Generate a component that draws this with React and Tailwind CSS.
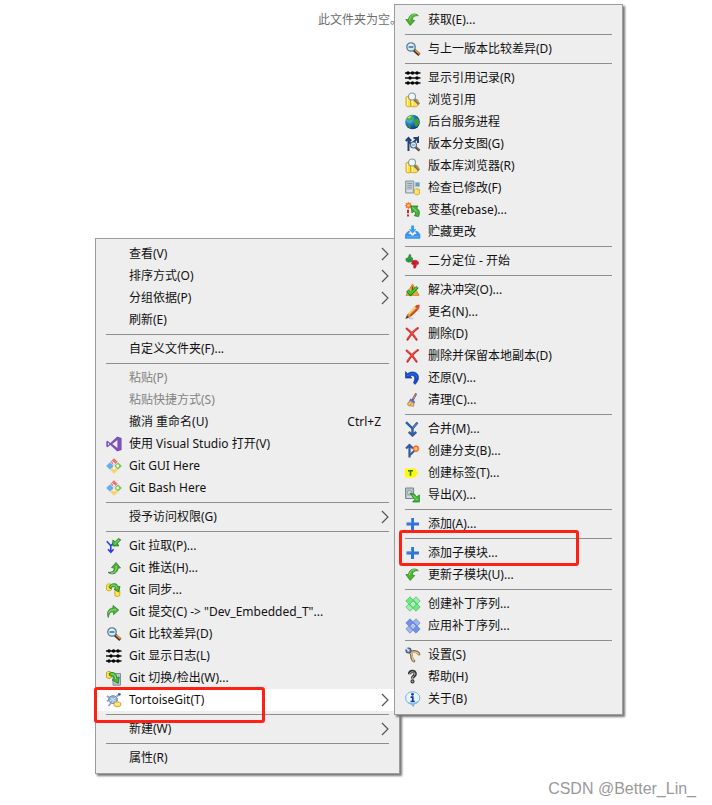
import React from "react";

const Svg = ({ children }) => (
  <svg viewBox="0 0 16 16" className="h-4 w-4 shrink-0" aria-hidden="true">
    {children}
  </svg>
);

const IconFetch = () => (
  <Svg>
    <path d="M13.3 3.6C11 1 4.6 1 3.4 7.5H.8l4.4 6 4.600-5L7.200 8C7.300 5 9.500 3.600 13.300 3.600Z" fill="#4bb52f" stroke="#2c7d22" strokeWidth=".7" />
    <path d="M10.500 2.700C7.500 2.200 5 4.200 4.600 8.300" fill="none" stroke="#8fe36b" strokeWidth="1" />
  </Svg>
);

const IconPush = () => (
  <Svg>
    <path d="M2 12.300C5 15 11.500 14.500 12 8h2.500L10 2.500 5.500 7.600 8.300 8C8.300 11 6 12.500 2 12.300Z" fill="#4bb52f" stroke="#39733a" strokeWidth=".8" />
    <path d="M5 13C8.500 13.300 10.200 11 10.300 6" fill="none" stroke="#9ade7c" strokeWidth="1" />
  </Svg>
);

const IconCommit = () => (
  <Svg>
    <path d="M2.300 13.500C.2 8 3 4 7 4.200V1.500L12.700 6 7.600 10.600 7.200 7.800C4.500 7.500 3 9.500 2.300 13.500Z" fill="#4bb52f" stroke="#33793a" strokeWidth=".8" />
    <path d="M2.600 9C3.500 6.300 6 5.600 10 5.900" fill="none" stroke="#9ade7c" strokeWidth="1" />
  </Svg>
);

const IconDiff = () => (
  <Svg>
    <path d="m9 9 5.400 4.800" stroke="#3c2f2a" strokeWidth="3.200" />
    <path d="m10.200 9.200 4.300 3.800" stroke="#ee9c32" strokeWidth="1.600" />
    <circle cx="6" cy="6" r="4.200" fill="#c9ecfa" stroke="#62758a" strokeWidth="1.300" />
    <path d="M3.600 6h4.800" stroke="#3f6f94" strokeWidth="1.500" />
    <path d="M3.800 4.400a3 3 0 0 1 3-1.200" fill="none" stroke="#fff" />
  </Svg>
);

const IconLog = () => (
  <Svg>
    <path d="M0 3h15.500M0 8h15.500M0 13h15.500" stroke="#101010" strokeWidth="1.300" />
    <g fill="#000">
      <circle cx="3" cy="3" r="1.700" />
      <circle cx="7.500" cy="3" r="1.700" />
      <circle cx="12" cy="3" r="1.700" />
      <circle cx="5" cy="8" r="1.700" />
      <circle cx="12" cy="8" r="1.700" />
      <circle cx="3" cy="13" r="1.700" />
      <circle cx="7.500" cy="13" r="1.700" />
      <circle cx="12" cy="13" r="1.700" />
    </g>
  </Svg>
);

const IconBrowse = () => (
  <Svg>
    <path d="M1 5.500C1 4 5 3.500 6.500 5v9C5 15.400 1 15 1 13.500Z" fill="#ffdf45" stroke="#c79a13" strokeWidth=".8" />
    <path d="M5.500 8c1.500-1.300 6-1.300 7.500 0v5.500c-1.500 1.800-6 1.800-7.500 0Z" fill="#ffe04e" stroke="#c79a13" strokeWidth=".8" />
    <path d="M2.500 6v7.500M7.500 9v5" stroke="#fff7a8" />
    <path d="m9.500 7.500 4.600 4.600" stroke="#7c675f" strokeWidth="2.600" />
    <path d="m10.500 8 3.700 3.600" stroke="#c5a58b" strokeWidth=".9" />
    <circle cx="7" cy="4.500" r="3.500" fill="#e7f8ff" stroke="#8b979d" strokeWidth="1.100" />
  </Svg>
);

const IconGlobe = () => (
  <Svg>
    <defs>
      <radialGradient id="ocean" cx=".3" cy=".3" r=".8">
        <stop offset="0" stopColor="#73d4ff" />
        <stop offset=".5" stopColor="#1673cd" />
        <stop offset="1" stopColor="#072f73" />
      </radialGradient>
    </defs>
    <circle cx="7.500" cy="8" r="7.300" fill="url(#ocean)" />
    <path d="M2.500 3.200C5 .9 7.500.8 8.500 1.200L7.300 3 9 4 6.300 6.500 4 7.200 1.300 5.500Z" fill="#54ae3b" />
    <path d="m9 6 3-2 2 2 .3 3.500-2.500 3.300-1.800-.5L9.300 9.500 8 8Z" fill="#3f9b37" />
    <path d="m3.500 10 2 .8.6 2-1.300 1.300C3.500 13.300 2.500 11.800 2.500 10.500Z" fill="#398e3d" />
    <path d="M2.500 3.700 5.200 2l1 .5-2 2Z" fill="#bff28a" />
  </Svg>
);

const IconGraph = () => (
  <Svg>
    <path d="M3.500 15V2M.8 5l2.700-3L6.200 5M3.500 5.500l5 4" fill="none" stroke="#25417b" strokeWidth="2" />
    <path d="M7.500 7 13 2v5M8.500 2h5.500" fill="none" stroke="#214078" strokeWidth="2" />
    <path d="m10.500 11 4 3.600" stroke="#4c403d" strokeWidth="2.500" />
    <path d="m11.500 11.200 3 2.600" stroke="#d28a45" />
    <circle cx="8.500" cy="9" r="3" fill="#d2effa" stroke="#586d83" strokeWidth="1.100" />
    <path d="M7 9h3" stroke="#5891b1" />
  </Svg>
);

const IconCheck = () => (
  <Svg>
    <path d="M.6 1h8.100v12H.6Z" fill="#c2cbd0" stroke="#8b989f" />
    <path d="M2.300 3.500H7M2.300 5.700H7M2.300 7.900H7" stroke="#8b9aa2" />
    <path d="M2 11h5" stroke="#eef4f6" />
    <path d="M10.200 2.500h4.300v4h-4.300Z" fill="#5b9fcb" stroke="#a7bdca" />
    <path d="M9.500 9.500c1-1 4-1 5 0v4.300c-1 1.300-4 1.300-5 0Z" fill="#ffdc49" stroke="#cda131" strokeWidth=".8" />
    <path d="M10.900 9.700v4" stroke="#fff6a0" />
  </Svg>
);

const IconRebase = () => (
  <Svg>
    <path d="M3.500.3v6.400M.3 3.500h6.400M1.200 1.200l4.600 4.600M5.800 1.200 1.200 5.800" stroke="#f2622f" strokeWidth="1.500" />
    <circle cx="3.500" cy="3.500" r="1.300" fill="#ffe35a" />
    <path d="M3 7.800v3.500M3 12.500v2" stroke="#e4201d" strokeWidth="2" />
    <path d="M6 4h7L11.500 6.200c2.800 1.400 3.800 4.500 2 8.300l-4-.7c1.300-2 1.300-3.200-.5-4.700L7 11Z" fill="#43b635" stroke="#257a25" strokeWidth=".8" />
    <path d="m7.500 5.300 4 4" stroke="#96e57d" />
  </Svg>
);

const IconStash = () => (
  <Svg>
    <path d="m3 7.500-2.600 3V14.300h14.500v-3.800L12.400 7.500h-2l2 3h-2.800l-1 1.500H6.500l-1-1.500H2.700l2-3Z" fill="#3197f6" stroke="#2a81df" strokeWidth=".7" />
    <path d="M1.500 12.800h12.300" stroke="#77beff" strokeWidth=".7" />
    <path d="M6.200 1.500h2.800v3.700h2.400L7.600 9.600 3.800 5.200h2.400Z" fill="#3b9df5" />
  </Svg>
);

const IconBisect = () => (
  <Svg>
    <path d="M.8 5.800 3.400 4.600 4.300 1.500c1.500-.3 2 .7 1.400 2.700l2 .8-.6 3.600-3.300.7L1.300 8.300Z" fill="#2aa33c" stroke="#176128" strokeWidth=".5" />
    <path d="M3.500 6 6.500 6.400M3.500 7.500l2.600.2" stroke="#1b7a2b" strokeWidth=".6" />
    <path d="M13.300 8.700 11 7.200l-3.500.3-1 3.500 2.200 1-.1 2.700c.9.900 2.100.4 2.400-.8l.5-2.100 2-.7Z" fill="#de2029" stroke="#971b24" strokeWidth=".5" />
    <path d="m8 8.800 2.700.4M7.800 10.300l2.600.3" stroke="#8f1720" strokeWidth=".6" />
  </Svg>
);

const IconResolve = () => (
  <Svg>
    <path d="M7.500 2 14 13.300H1Z" fill="#f6a83b" stroke="#d48625" />
    <path d="M7.500 4.500v4" stroke="#6d4820" strokeWidth="1.500" />
    <path d="m2.300 8.600 3.200 3.600L12.500 5" fill="none" stroke="#187c1e" strokeWidth="3.200" />
    <path d="m2.700 8.800 2.800 2.900L12.200 5" fill="none" stroke="#39d12d" strokeWidth="1.800" />
  </Svg>
);

const IconRename = () => (
  <Svg>
    <path d="m.8 14.600 1.700-4 7.900-8.300L14.200 1l-.6 4-8.200 7.800Z" fill="#ef8b28" stroke="#ad6425" strokeWidth=".7" />
    <path d="m3.600 10 7-7" stroke="#ffd48b" strokeWidth="1.600" />
    <path d="m5.500 11.800 6.700-6.500" stroke="#c13f1e" strokeWidth="1.500" />
    <path d="m10 2.500 1.500-1.300 2.900-.5-.3 3-1.200 1.500Z" fill="#e64035" />
    <path d="m.8 14.600 1.300-3 1.800 1.700Z" fill="#25395d" />
    <path d="M4 14.700h4.500" stroke="#b7bdc5" />
  </Svg>
);

const IconDelete = () => (
  <Svg>
    <path d="M1.700 2.700C6 5.800 9 9.500 11.500 13.500M12.800 2.200C8.500 5 5 9.500 2.500 13.500" fill="none" stroke="#c8282a" strokeWidth="2.200" strokeLinecap="round" />
    <path d="M1.700 2.500C6 5.500 9 9 11.300 13M12 2.500C8 5 5 9 2.600 12.500" fill="none" stroke="#ff5246" strokeWidth="1" />
  </Svg>
);

const IconRevert = () => (
  <Svg>
    <path d="M.5 1.600v6.500L7 8 5 6c3.500-1.300 6.500.5 3.500 6.700l1.500 1.700C16 9 14 1.200 6.500 2 4.800 2.200 3.600 2.800 2.700 3.800Z" fill="#164dce" stroke="#082c85" strokeWidth=".6" />
    <path d="m1.800 5.500 1.500.2C7 2 11.500 3.500 11.700 7.500" fill="none" stroke="#3f78e6" strokeWidth=".8" />
  </Svg>
);

const IconClean = () => (
  <Svg>
    <path d="m7.500 8.300 3.300-6.100" stroke="#606774" strokeWidth="2.200" strokeLinecap="round" />
    <path d="m8.300 7 2.300-4.500" stroke="#e88848" strokeWidth="1" />
    <path d="m5.300 7.500 4.200 2.400-.9 4.400-5.300-.6-1-1.600Z" fill="#d9a850" stroke="#a57b42" strokeWidth=".6" />
    <path d="m5 7.500 4.500 2.700" stroke="#576edb" strokeWidth="2.200" />
    <path d="m5.500 10.500-1.500 2M7.500 11.500l-.8 2" stroke="#f9df9c" />
  </Svg>
);

const IconMerge = () => (
  <Svg>
    <path d="M1 1.200 7.500 7.500V14M12.500 1.500 7.500 7.500M3.800 10.800l3.700 3.700L11.200 10.800" fill="none" stroke="#315d9e" strokeWidth="2.400" />
    <path d="m8 7 4-4.800" stroke="#81a8d3" strokeWidth=".6" />
  </Svg>
);

const IconBranch = () => (
  <Svg>
    <path d="M4.500 14.500V2M1 5.500 4.500 2 8 5.500" fill="none" stroke="#315d9e" strokeWidth="2.200" />
    <path d="M5 12 10 7" stroke="#315d9e" strokeWidth="1.900" />
    <circle cx="11" cy="5.700" r="2.400" fill="#fff2a6" stroke="#ff6531" strokeWidth="1.400" />
    <path d="m11 2v7.400M7.400 5.700h7.200" stroke="#ff7540" strokeWidth=".7" />
    <circle cx="11" cy="5.700" r="1" fill="#ffe366" />
  </Svg>
);

const IconTag = () => (
  <Svg>
    <path d="M0 3.500h10L13 8l-3 4.500H0Z" fill="#fffa00" />
    <path d="M3 5.700h5M5.500 5.700v5" stroke="#2c7c2e" strokeWidth="1.600" />
  </Svg>
);

const IconExport = () => (
  <Svg>
    <path d="M.6 1h8v10.500h-8Z" fill="#b8c4c8" stroke="#75858c" />
    <circle cx="4.500" cy="5.500" r="2.200" fill="#cdd7da" stroke="#819198" strokeWidth=".8" />
    <path d="M2 10h5" stroke="#e8eef0" />
    <path d="m5 6.200 4.500 1 2.200 2.700 2.700-2V15H7.600l2.200-2.400Z" fill="#3ebd2f" stroke="#1d7524" strokeWidth=".7" />
    <path d="m8 8.500 4.500 4.500" stroke="#91e36f" />
  </Svg>
);

const IconPlus = () => (
  <Svg>
    <path d="M6 2h3v4.500h5v3H9V14H6V9.500H1.500v-3H6Z" fill="#2f73df" />
    <path d="M6.500 2.500v4.500H2" fill="none" stroke="#5e9bea" strokeWidth=".8" />
  </Svg>
);

const Patch = ({ fill, edge, light }) => (
  <Svg>
    <g stroke={edge} strokeWidth=".6" strokeLinejoin="round">
      <path d="M.8 11 11 .8l4.200 4.200L5 15.200Z" fill={light} />
      <path d="M.8 5 5 .8 15.200 11 11 15.200Z" fill={fill} />
    </g>
    <path d="m4.600 8.200L8 4.800l3.400 3.400L8 11.600Z" fill={light} stroke={edge} strokeWidth=".6" />
    <path d="M6.300 8h.9M8.800 8h.9M8 6v.9M8 9.300v.9" stroke="#fff" strokeWidth=".9" />
  </Svg>
);
const IconPatchCreate = () => <Patch fill="#66ee7b" edge="#579b63" light="#93f4a3" />;
const IconPatchApply = () => <Patch fill="#6b91f5" edge="#6276ae" light="#a0b6f2" />;

const IconSettings = () => (
  <Svg>
    <path d="M4.500 4.500C8.500 5 11.500 3 14 7M5 4.500C8 8 5 12 9 14" fill="none" stroke="#72634a" strokeWidth="2.700" strokeLinecap="round" />
    <path d="M5.500 5C9 5.500 11.500 3.700 13.800 7M5.500 5.500C8.500 8.500 6 12 8.800 13.800" fill="none" stroke="#e9c27c" strokeWidth="1.400" strokeLinecap="round" />
    <circle cx="3.500" cy="3.500" r="2.500" fill="#8ba2c4" stroke="#354f7b" strokeWidth="1.100" />
    <path d="m.8.8 3 3" stroke="#e4eef5" strokeWidth="1.300" />
  </Svg>
);

const IconHelp = () => (
  <Svg>
    <path d="M4.500 5.300C4.500 1.400 10.500 1.600 10.200 5c-.2 2.200-2.700 2-2.700 4.600" fill="none" stroke="#303030" strokeWidth="3.200" />
    <path d="M4.600 5C4.900 2 10.100 2.300 10 5c-.2 1.900-2.600 2-2.500 4.300" fill="none" stroke="#bababa" strokeWidth="1" />
    <circle cx="7.500" cy="12.400" r="1.500" fill="#aaa" stroke="#303030" strokeWidth="1.100" />
  </Svg>
);

const IconAbout = () => (
  <Svg>
    <path d="M7.500.8C3.500.8.7 3.600.7 7c0 3.500 2.600 5.600 5.800 6l1.800 2.500.8-2.700c3.400-.6 5.700-2.700 5.700-5.800C14.800 3.600 11.500.8 7.500.8Z" fill="#e8f5ff" stroke="#6ca6d8" strokeWidth=".9" />
    <path d="M3 11.500c3 1.800 7 1.700 9.800-.8" fill="none" stroke="#7db9e6" strokeWidth="1.400" />
    <circle cx="7.500" cy="3.300" r="1.400" fill="#153aa0" />
    <path d="M5.600 6.200h2.200v4.500M5.500 10.500h4.300" fill="none" stroke="#153aa0" strokeWidth="1.700" />
  </Svg>
);

const IconVisualStudio = () => (
  <Svg>
    <path d="M11.300.4 15.600 2v12l-4.300 1.600-7-6.500L1.600 11.300.3 10.600V5.400l1.300-.7 2.700 2.200Z" fill="#7b52bd" />
    <path d="M1.900 6.500v3L3.400 8ZM6.300 8l5.100 3.900V4.100Z" fill="#eee" />
  </Svg>
);

const IconGit = () => (
  <Svg>
    <path d="m8 .2 3.600 3.600L8 7.400 4.400 3.800Z" fill="#f36f70" />
    <path d="m12 4.200 3.800 3.800-3.800 3.800L8.200 8Z" fill="#7fc653" />
    <path d="m8 8.600 3.600 3.600L8 15.800l-3.600-3.600Z" fill="#fbd268" />
    <path d="m4 4.200L7.800 8 4 11.800.2 8Z" fill="#64aef0" />
    <path d="m5.500 2.700 3 3M8 5.300v5.400" stroke="#f4f4f4" strokeWidth="1" />
    <circle cx="8" cy="5.500" r=".9" fill="#fff" />
    <circle cx="11.700" cy="8" r="1.400" fill="#fff" />
    <circle cx="8" cy="10.600" r=".9" fill="#fff" />
  </Svg>
);

const IconPull = () => (
  <Svg>
    <path d="m.8 3.200 4 4.500V14M2 11.300l2.800 3 2.800-3M4.800 7.700 8.500 4" fill="none" stroke="#283ee4" strokeWidth="1.600" />
    <path d="m14.800 1.800-3.400 3.500 1.300 2.600H6.800V2.200l2.400 1.500L12.500.4Z" fill="#43b835" stroke="#1b7528" strokeWidth=".8" />
    <path d="m13 2-4.500 4" stroke="#95e178" strokeWidth=".9" />
  </Svg>
);

const IconSync = () => (
  <Svg>
    <path d="M.6 3C1.500 1.500 4.500 1.500 5.500 3v5c-1 1-4 1-4.900 0Z" fill="#ffe443" stroke="#c49825" strokeWidth=".8" />
    <path d="M8.800 8.500c1-1 4-1 5 0v5c-1 1.200-4 1.200-5 0Z" fill="#ffe443" stroke="#c49825" strokeWidth=".8" />
    <path d="M3 4.500C6 .5 11.500.7 12.300 5l1.700-.5-1.400 5.500-4.600-2.800 1.600-1C9 4 6 4.200 4.500 7Z" fill="#48b835" stroke="#217927" strokeWidth=".8" />
    <path d="M4.500 4.500C7 2 10.500 3 11.200 6.500" fill="none" stroke="#9ce37d" />
  </Svg>
);

const IconSwitch = () => (
  <Svg>
    <path d="M7 3.500h7.500v11.700H7Z" fill="#bbc5c8" stroke="#819096" />
    <path d="M.5 2.500C1.400 1 4.500 1 5.500 2.500v5c-1 1.200-4 1.200-5 0Z" fill="#ffe443" stroke="#b78e24" strokeWidth=".8" />
    <path d="M3 3.500C7 1 10.500 3 10.700 8l2.500-1-1 6.500-6-3.500 2-1.200C8 6 6 5.300 4 6Z" fill="#47bb36" stroke="#1b7727" strokeWidth=".8" />
    <path d="M5 4C8 3.500 9.400 5.500 9.700 9" fill="none" stroke="#9de580" />
  </Svg>
);

const IconTortoise = () => (
  <Svg>
    <path d="M.8 4 3.500 5.500M.8 9 3.500 8M2.500 14l2.500-3M10.500 4.500 12.500 3" stroke="#8ba4ca" strokeWidth="1.700" />
    <ellipse cx="7" cy="7.600" rx="4.400" ry="3.900" fill="#94b1dd" stroke="#6b87b7" />
    <path d="m4.500 6 3 1.200L10 5.500M7.500 7.200 6.500 11M3.500 9l3-1.500 4 2" fill="none" stroke="#dbe7f7" strokeWidth=".8" />
    <circle cx="13.300" cy="2.300" r="1.400" fill="#3c6193" />
    <path d="M8 11c1-1.500 5.500-1.500 6.700 0v2.500c-1.500 1.700-5.500 1.700-6.700 0Z" fill="#ffdf63" stroke="#c49429" strokeWidth=".8" />
    <path d="M9.300 11.500c1.500.8 3 .8 4.300 0" fill="none" stroke="#fff4ad" />
  </Svg>
);

const Chevron = () => (
  <svg viewBox="0 0 8 14" className="h-3.5 w-2 shrink-0" fill="none" aria-hidden="true">
    <path d="m1 1 6 6-6 6" stroke="#4a5468" strokeWidth="1.100" />
    <path d="m.5 1.500L6 7 .5 12.500" stroke="#c98e6b" strokeWidth=".4" />
  </svg>
);

const SEP = null;

const mainItems = [
  { label: "查看(V)", sub: true },
  { label: "排序方式(O)", sub: true },
  { label: "分组依据(P)", sub: true },
  { label: "刷新(E)" },
  SEP,
  { label: "自定义文件夹(F)..." },
  SEP,
  { label: "粘贴(P)", disabled: true },
  { label: "粘贴快捷方式(S)", disabled: true },
  { label: "撤消 重命名(U)", shortcut: "Ctrl+Z" },
  { label: "使用 Visual Studio 打开(V)", icon: IconVisualStudio },
  { label: "Git GUI Here", icon: IconGit },
  { label: "Git Bash Here", icon: IconGit },
  SEP,
  { label: "授予访问权限(G)", sub: true },
  SEP,
  { label: "Git 拉取(P)...", icon: IconPull },
  { label: "Git 推送(H)...", icon: IconPush },
  { label: "Git 同步...", icon: IconSync },
  { label: 'Git 提交(C) -> "Dev_Embedded_T"...', icon: IconCommit },
  { label: "Git 比较差异(D)", icon: IconDiff },
  { label: "Git 显示日志(L)", icon: IconLog },
  { label: "Git 切换/检出(W)...", icon: IconSwitch },
  { label: "TortoiseGit(T)", icon: IconTortoise, sub: true, active: true, mark: "-left-0.5 -top-0.5 h-9 w-[171px]" },
  SEP,
  { label: "新建(W)", sub: true },
  SEP,
  { label: "属性(R)" },
];

const gitItems = [
  { label: "获取(E)...", icon: IconFetch },
  SEP,
  { label: "与上一版本比较差异(D)", icon: IconDiff },
  SEP,
  { label: "显示引用记录(R)", icon: IconLog },
  { label: "浏览引用", icon: IconBrowse },
  { label: "后台服务进程", icon: IconGlobe },
  { label: "版本分支图(G)", icon: IconGraph },
  { label: "版本库浏览器(R)", icon: IconBrowse },
  { label: "检查已修改(F)", icon: IconCheck },
  { label: "变基(rebase)...", icon: IconRebase },
  { label: "贮藏更改", icon: IconStash },
  SEP,
  { label: "二分定位 - 开始", icon: IconBisect },
  SEP,
  { label: "解决冲突(O)...", icon: IconResolve },
  { label: "更名(N)...", icon: IconRename },
  { label: "删除(D)", icon: IconDelete },
  { label: "删除并保留本地副本(D)", icon: IconDelete },
  { label: "还原(V)...", icon: IconRevert },
  { label: "清理(C)...", icon: IconClean },
  SEP,
  { label: "合并(M)...", icon: IconMerge },
  { label: "创建分支(B)...", icon: IconBranch },
  { label: "创建标签(T)...", icon: IconTag },
  { label: "导出(X)...", icon: IconExport },
  SEP,
  { label: "添加(A)...", icon: IconPlus },
  SEP,
  { label: "添加子模块...", icon: IconPlus, mark: "left-1 -top-3 h-9 w-[180px]" },
  { label: "更新子模块(U)...", icon: IconFetch },
  SEP,
  { label: "创建补丁序列...", icon: IconPatchCreate },
  { label: "应用补丁序列...", icon: IconPatchApply },
  SEP,
  { label: "设置(S)", icon: IconSettings },
  { label: "帮助(H)", icon: IconHelp },
  { label: "关于(B)", icon: IconAbout },
];

function MenuItem({ label, icon: Icon, sub, shortcut, disabled, active, mark }) {
  return (
    <li role="none" className="relative">
      <button
        type="button"
        role="menuitem"
        disabled={disabled}
        aria-haspopup={sub ? "menu" : undefined}
        className={
          "flex h-[22px] w-full items-center px-2.5 text-left whitespace-nowrap " +
          (active ? "bg-white " : "") +
          (disabled ? "text-[#838383]" : "text-[#111]")
        }
      >
        <span className="mr-[7px] h-4 w-4 shrink-0">{Icon && <Icon />}</span>
        <span className="grow">{label}</span>
        {shortcut && <span className="mr-2">{shortcut}</span>}
        {sub && <Chevron />}
      </button>
      {mark && <span className={"pointer-events-none absolute z-10 rounded-[3px] border-3 border-[#ff2015] " + mark} />}
    </li>
  );
}

function Menu({ label, items, className }) {
  return (
    <ul
      role="menu"
      aria-label={label}
      className={
        "absolute border border-[#9c9c9c] bg-[#eeeeee] py-1 shadow-[2px_2px_2px_#777777] " + className
      }
    >
      {items.map((item, i) =>
        item ? (
          <MenuItem key={i} {...item} />
        ) : (
          <li key={i} role="separator" className="mx-2.5 flex h-[7px] items-center">
            <span className="h-px w-full bg-[#8e8e8e]" />
          </li>
        )
      )}
    </ul>
  );
}

export default function App() {
  return (
    <main className="relative min-h-screen overflow-hidden bg-white font-['Noto_Sans','Noto_Sans_CJK_SC',sans-serif] text-xs leading-4">
      <p className="pt-3 pl-[318px] text-[#6d6d6d]">此文件夹为空。</p>
      <Menu label="文件夹" items={mainItems} className="top-[238px] left-[95px] w-[305px]" />
      <Menu label="TortoiseGit" items={gitItems} className="top-1 left-[394px] w-[229px]" />
      <p className="absolute right-4 bottom-1 font-['Liberation_Sans',sans-serif] text-base leading-6 text-[#999999]">
        CSDN @Better_Lin_
      </p>
    </main>
  );
}
